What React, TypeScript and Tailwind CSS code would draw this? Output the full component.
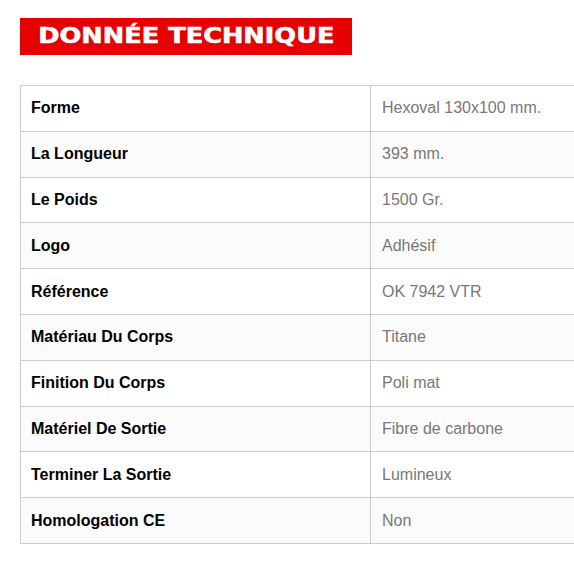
import React from 'react';

type Spec = { label: string; value: string };

const specs: Spec[] = [
  { label: 'Forme', value: 'Hexoval 130x100 mm.' },
  { label: 'La Longueur', value: '393 mm.' },
  { label: 'Le Poids', value: '1500 Gr.' },
  { label: 'Logo', value: 'Adhésif' },
  { label: 'Référence', value: 'OK 7942 VTR' },
  { label: 'Matériau Du Corps', value: 'Titane' },
  { label: 'Finition Du Corps', value: 'Poli mat' },
  { label: 'Matériel De Sortie', value: 'Fibre de carbone' },
  { label: 'Terminer La Sortie', value: 'Lumineux' },
  { label: 'Homologation CE', value: 'Non' },
];

const App: React.FC = () => {
  return (
    <div className="w-screen h-screen overflow-hidden bg-white font-['Liberation_Sans',Arial,sans-serif]">
      <div className="pl-5 pt-[18px]">
        <div className="w-[332px] h-[37px] bg-[#e60000] flex items-center justify-center">
          <span className="inline-block scale-x-[1.22] text-white text-[21px] font-bold leading-none font-['DejaVu_Sans',sans-serif] [-webkit-text-stroke:0.6px_white]">
            DONNÉE TECHNIQUE
          </span>
        </div>

        <div className="mt-[30px] w-[580px] border-l border-b border-[#cccccc]">
          {specs.map((row, i) => (
            <div
              key={row.label}
              className={`grid grid-cols-[350px_1fr] border-t border-[#cccccc] h-[45.8px] ${i % 2 === 1 ? 'bg-[#fbfbfb]' : 'bg-white'}`}
            >
              <div className="flex items-center pl-[10px] border-r border-[#cccccc] text-[16px] font-bold text-black">
                {row.label}
              </div>
              <div className="flex items-center pl-[11px] text-[16px] text-[#787878]">
                {row.value}
              </div>
            </div>
          ))}
        </div>
      </div>
    </div>
  );
};

export default App;
